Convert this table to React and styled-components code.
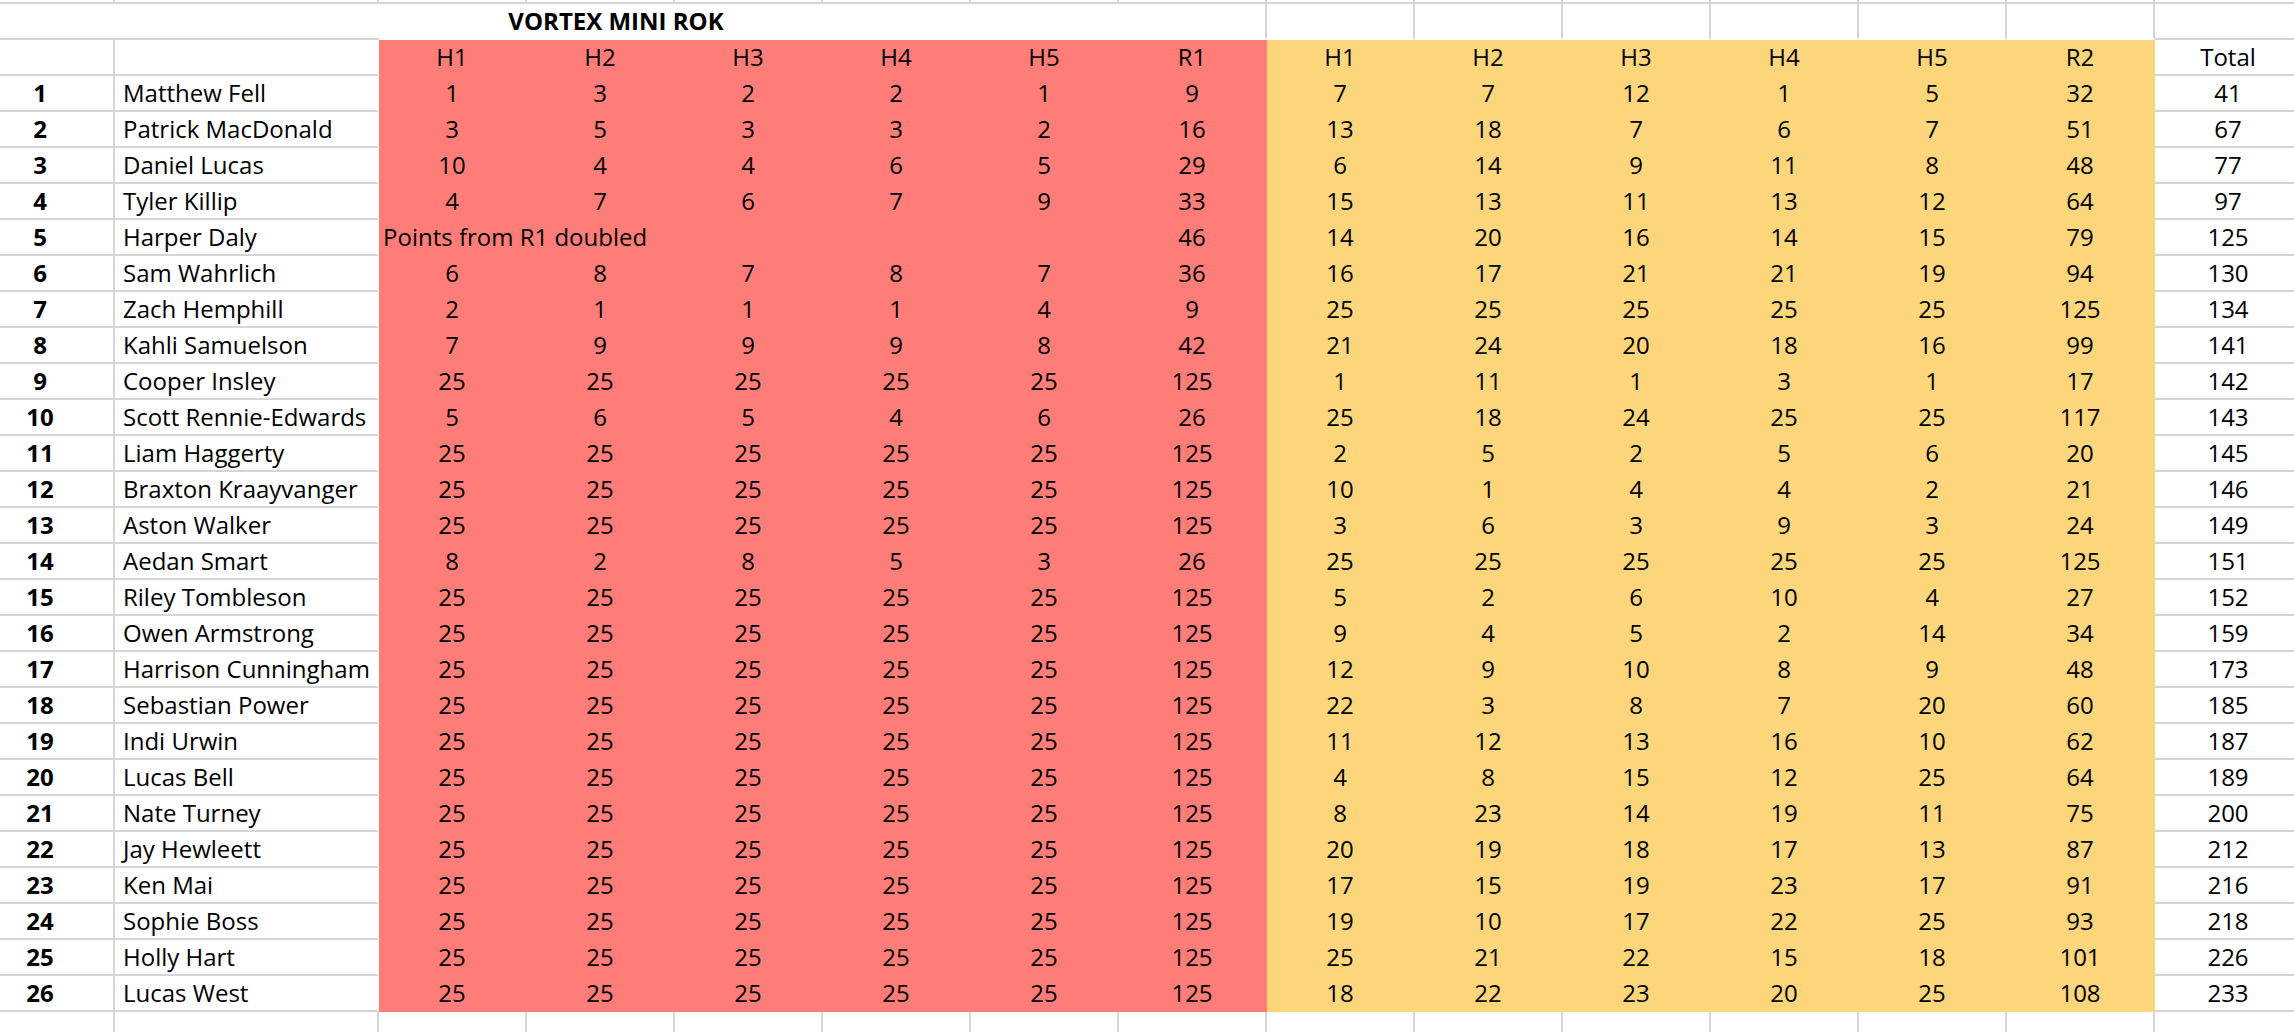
import React from "react";
import styled, { createGlobalStyle } from "styled-components";

// sheet colours
const Color = {
  Grid: "#d5d5d5",
  Pink: "#fe7d79",
  Yellow: "#fdd57b",
  White: "#ffffff",
  Ink: "#000000",
};

const COLS = 15;
const FULL = [25, 25, 25, 25, 25, 125];
const NOTE = "Points from R1 doubled";

// place, name, round 1, round 2, total
const riders = [
  [1, "Matthew Fell", [1, 3, 2, 2, 1, 9], [7, 7, 12, 1, 5, 32], 41],
  [2, "Patrick MacDonald", [3, 5, 3, 3, 2, 16], [13, 18, 7, 6, 7, 51], 67],
  [3, "Daniel Lucas", [10, 4, 4, 6, 5, 29], [6, 14, 9, 11, 8, 48], 77],
  [4, "Tyler Killip", [4, 7, 6, 7, 9, 33], [15, 13, 11, 13, 12, 64], 97],
  [5, "Harper Daly", 46, [14, 20, 16, 14, 15, 79], 125],
  [6, "Sam Wahrlich", [6, 8, 7, 8, 7, 36], [16, 17, 21, 21, 19, 94], 130],
  [7, "Zach Hemphill", [2, 1, 1, 1, 4, 9], FULL, 134],
  [8, "Kahli Samuelson", [7, 9, 9, 9, 8, 42], [21, 24, 20, 18, 16, 99], 141],
  [9, "Cooper Insley", FULL, [1, 11, 1, 3, 1, 17], 142],
  [10, "Scott Rennie-Edwards", [5, 6, 5, 4, 6, 26], [25, 18, 24, 25, 25, 117], 143],
  [11, "Liam Haggerty", FULL, [2, 5, 2, 5, 6, 20], 145],
  [12, "Braxton Kraayvanger", FULL, [10, 1, 4, 4, 2, 21], 146],
  [13, "Aston Walker", FULL, [3, 6, 3, 9, 3, 24], 149],
  [14, "Aedan Smart", [8, 2, 8, 5, 3, 26], FULL, 151],
  [15, "Riley Tombleson", FULL, [5, 2, 6, 10, 4, 27], 152],
  [16, "Owen Armstrong", FULL, [9, 4, 5, 2, 14, 34], 159],
  [17, "Harrison Cunningham", FULL, [12, 9, 10, 8, 9, 48], 173],
  [18, "Sebastian Power", FULL, [22, 3, 8, 7, 20, 60], 185],
  [19, "Indi Urwin", FULL, [11, 12, 13, 16, 10, 62], 187],
  [20, "Lucas Bell", FULL, [4, 8, 15, 12, 25, 64], 189],
  [21, "Nate Turney", FULL, [8, 23, 14, 19, 11, 75], 200],
  [22, "Jay Hewleett", FULL, [20, 19, 18, 17, 13, 87], 212],
  [23, "Ken Mai", FULL, [17, 15, 19, 23, 17, 91], 216],
  [24, "Sophie Boss", FULL, [19, 10, 17, 22, 25, 93], 218],
  [25, "Holly Hart", FULL, [25, 21, 22, 15, 18, 101], 226],
  [26, "Lucas West", FULL, [18, 22, 23, 20, 25, 108], 233],
];

const GlobalStyle = createGlobalStyle`
  html, body {
    margin: 0;
    padding: 0;
    background: ${Color.White};
    overflow: hidden;
  }
  body {
    font-family: "Open Sans", "Liberation Sans", sans-serif;
    color: ${Color.Ink};
  }
`;

// styled elements
const Sheet = styled.div`
  display: grid;
  grid-template-columns: 148px 264px repeat(12, 148px) 148px;
  grid-auto-rows: 36px;
  width: max-content;
  margin: -32px 0 0 -33px;
  font-size: 24px;
  line-height: 1;
`;
const Cell = styled.div`
  box-sizing: border-box;
  display: flex;
  align-items: center;
  justify-content: ${(p) => (p.$left ? "flex-start" : "center")};
  padding: 0 8px;
  white-space: nowrap;
  font-weight: ${(p) => (p.$bold ? 700 : 400)};
  background: ${(p) => (p.$fill ? Color[p.$fill] : Color.White)};
  border-right: 2px solid
    ${(p) => (p.$fill || p.$openRight ? "transparent" : Color.Grid)};
  border-bottom: 2px solid
    ${(p) => (p.$fill || p.$openBottom ? "transparent" : Color.Grid)};
  grid-column: ${(p) => (p.$span ? `span ${p.$span}` : "auto")};
`;
const TitleCell = styled(Cell)`
  grid-column: span 8;
  font-weight: 700;
  border-bottom-color: transparent;
  background: linear-gradient(${Color.Grid}, ${Color.Grid}) left bottom / 412px
      2px no-repeat border-box,
    ${Color.White};
`;
const NoteCell = styled(Cell)`
  grid-column: span 5;
  justify-content: flex-start;
  padding-left: 4px;
`;

function BlankRow() {
  return Array.from({ length: COLS }, (_, i) => <Cell key={i} />);
}

function Scores({ values, fill }) {
  return values.map((v, i) => (
    <Cell key={i} $fill={fill}>
      {v}
    </Cell>
  ));
}

function App() {
  const heats = ["H1", "H2", "H3", "H4", "H5"];

  return (
    <>
      <GlobalStyle />
      <Sheet>
        <BlankRow />

        <TitleCell>VORTEX MINI ROK</TitleCell>
        {heats.concat("R2").map((h) => (
          <Cell key={h} $openBottom />
        ))}
        <Cell />

        <Cell />
        <Cell $openRight />
        <Scores values={heats.concat("R1")} fill="Pink" />
        <Scores values={heats.concat("R2")} fill="Yellow" />
        <Cell>Total</Cell>

        {riders.map(([place, name, r1, r2, total]) => (
          <React.Fragment key={place}>
            <Cell $bold>{place}</Cell>
            <Cell $left $openRight>
              {name}
            </Cell>
            {Array.isArray(r1) ? (
              <Scores values={r1} fill="Pink" />
            ) : (
              <>
                <NoteCell $fill="Pink">{NOTE}</NoteCell>
                <Cell $fill="Pink">{r1}</Cell>
              </>
            )}
            <Scores values={r2} fill="Yellow" />
            <Cell>{total}</Cell>
          </React.Fragment>
        ))}

        <BlankRow />
      </Sheet>
    </>
  );
}

export default App;
